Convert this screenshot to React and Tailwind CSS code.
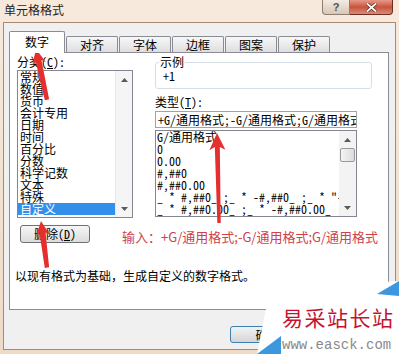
const MONO = "font-['Noto_Sans_Mono_CJK_SC','Noto_Sans_CJK_SC',monospace]";

function UpArrow() {
  return (
    <svg width="7" height="4" viewBox="0 0 7 4">
      <path d="M0 4 L3.5 0 L7 4 Z" fill="#5a5a5a" />
    </svg>
  );
}
function DownArrow() {
  return (
    <svg width="7" height="4" viewBox="0 0 7 4">
      <path d="M0 0 L3.5 4 L7 0 Z" fill="#5a5a5a" />
    </svg>
  );
}

function Arrow({ x, y, angle, len, w = 5, hw = 7, hl = 15 }) {
  const pts = [
    [0, 0],
    [-hw, hl],
    [-w / 2, hl - 3],
    [-w / 2 + 0.8, len],
    [w / 2 - 0.8, len],
    [w / 2, hl - 3],
    [hw, hl],
  ]
    .map((p) => p.join(","))
    .join(" ");
  return (
    <g transform={`translate(${x} ${y}) rotate(${angle})`}>
      <polygon points={pts} fill="#e52f2f" />
    </g>
  );
}

const categories = [
  "常规",
  "数值",
  "货币",
  "会计专用",
  "日期",
  "时间",
  "百分比",
  "分数",
  "科学记数",
  "文本",
  "特殊",
  "自定义",
];

const types = [
  "G/通用格式",
  "0",
  "0.00",
  "#,##0",
  "#,##0.00",
  '_ * #,##0_ ;_ * -#,##0_ ;_ * "-"_ ;_ @_ ',
  '_ * #,##0.00_ ;_ * -#,##0.00_ ;_ * "-"??_ ;_ @_ ',
];

function Tab({ label }) {
  return (
    <div className="ml-px w-[52px] h-[16px] border border-b-0 border-[#898c95] rounded-t-[2px] bg-gradient-to-b from-[#f7f7f7] to-[#dedede] flex items-center justify-center text-[12px] leading-[12px] text-black">
      {label}
    </div>
  );
}

export default function App() {
  return (
    <div
      className={`relative w-[399px] h-[354px] overflow-hidden bg-gradient-to-b from-[#f7eadd] to-[#eedac6] text-black ${MONO}`}
    >
      {/* title bar */}
      <div className="h-[22px] flex justify-between">
        <div className="pl-[4px] pt-[2px] text-[12px] leading-[16px] text-[#1e1e1e] font-['Noto_Sans_CJK_SC',sans-serif]">
          单元格格式
        </div>
        <div className="flex pr-[6px] h-[15px]">
          <div className="w-[28px] h-[15px] border border-t-0 border-[#8e7d70] rounded-bl-[4px] bg-gradient-to-b from-[#f3ebe3] to-[#d8c7b7] flex items-center justify-center text-[11px] font-bold text-[#505050] leading-none font-['Liberation_Sans',sans-serif]">
            ?
          </div>
          <div className="w-[43px] h-[15px] border border-t-0 border-l-0 border-[#6d2f24] rounded-br-[4px] bg-gradient-to-b from-[#e69a88] via-[#c9533d] to-[#d98a75] flex items-center justify-center">
            <svg width="11" height="9" viewBox="0 0 11 9">
              <path d="M1 0.5 L10 8.5 M10 0.5 L1 8.5" stroke="#5b2118" strokeWidth="3.2" />
              <path d="M1 0.5 L10 8.5 M10 0.5 L1 8.5" stroke="#ffffff" strokeWidth="1.8" />
            </svg>
          </div>
        </div>
      </div>

      {/* client area */}
      <div className="mx-[3px] h-[328px] border border-[#a38b76] bg-[#f0f0f0] pt-[8px] pl-[5px]">
        {/* tabs */}
        <div className="flex items-end h-[21px]">
          <div className="relative z-10 -mb-px w-[56px] h-[22px] border border-b-0 border-[#898c95] rounded-t-[2px] bg-white flex items-center justify-center text-[12px] leading-[12px] pb-[2px]">
            数字
          </div>
          <Tab label="对齐" />
          <Tab label="字体" />
          <Tab label="边框" />
          <Tab label="图案" />
          <Tab label="保护" />
        </div>

        {/* panel */}
        <div className="w-[380px] h-[258px] border border-[#898c95] bg-white">
          <div className="flex pl-[7px] pt-[3px]">
            {/* left column */}
            <div className="w-[116px]">
              <div className="h-[12px] text-[12px] leading-[12px]">
                分类(<span className="underline">C</span>):
              </div>
              <div className="mt-[2px] h-[148px] border border-[#828790] flex">
                <div className="flex-1 pt-0">
                  {categories.map((c, i) => (
                    <div
                      key={c}
                      className={
                        i === categories.length - 1
                          ? "h-[12px] text-[12px] leading-[12px] pl-[2px] bg-[#3390ea] text-white"
                          : "h-[12px] text-[12px] leading-[12px] pl-[2px]"
                      }
                    >
                      {c}
                    </div>
                  ))}
                </div>
                <div className="w-[17px] bg-[#f5f5f5] border-l border-[#e8e8e8] flex flex-col justify-between">
                  <div className="h-[17px] flex items-center justify-center">
                    <UpArrow />
                  </div>
                  <div className="h-[17px] flex items-center justify-center">
                    <DownArrow />
                  </div>
                </div>
              </div>
            </div>

            {/* right column */}
            <div className="ml-[22px] w-[217px]">
              <div className="relative mt-[6px] h-[27px] border border-[#d5dfe5] rounded-[3px]">
                <div className="absolute left-[3px] -top-[7px] bg-white px-[1px] text-[12px] leading-[12px]">
                  示例
                </div>
                <div className="pl-[7px] pt-[7px] text-[12px] leading-[12px]">+1</div>
              </div>
              <div className="mt-[7px] h-[12px] text-[12px] leading-[12px]">
                类型(<span className="underline">T</span>):
              </div>
              <div className="mt-[3px] w-[202px] h-[17px] border border-[#a3a3a3] overflow-hidden whitespace-nowrap pl-[2px] text-[12px] leading-[15px]">
                +G/通用格式;-G/通用格式;G/通用格式
              </div>
              <div className="mt-[2px] w-[202px] h-[87px] border border-[#828790] flex">
                <div className="flex-1 overflow-hidden whitespace-pre pl-[1px]">
                  {types.map((t) => (
                    <div key={t} className="h-[12px] text-[12px] leading-[12px]">
                      {t}
                    </div>
                  ))}
                </div>
                <div className="w-[17px] bg-[#f3f3f3] flex flex-col">
                  <div className="h-[17px] flex items-center justify-center">
                    <UpArrow />
                  </div>
                  <div className="mx-[1px] h-[14px] border border-[#9a9a9a] rounded-[2px] bg-gradient-to-r from-[#f4f4f4] to-[#dcdcdc]" />
                  <div className="flex-1" />
                  <div className="h-[17px] flex items-center justify-center">
                    <DownArrow />
                  </div>
                </div>
              </div>
            </div>
          </div>

          {/* row 2 */}
          <div className="flex items-start mt-[7px] pl-[10px]">
            <div className="w-[70px] h-[18px] border border-[#707070] rounded-[3px] bg-gradient-to-b from-[#f6f6f6] to-[#dcdcdc] flex items-center justify-center text-[12px] leading-[12px]">
              删除(<span className="underline">D</span>)
            </div>
            <div className="ml-[32px] mt-[4px] text-[13px] leading-[16px] text-[#d0414a] whitespace-nowrap font-['Noto_Sans_CJK_SC',sans-serif]">
              输入：+G/通用格式;-G/通用格式;G/通用格式
            </div>
          </div>

          {/* description */}
          <div className="mt-[25px] pl-[5px] text-[12px] leading-[12px]">
            以现有格式为基础，生成自定义的数字格式。
          </div>
        </div>

        {/* OK button */}
        <div className="mt-[16px] ml-[221px] w-[75px] h-[17px] border border-[#3c7fb1] rounded-[3px] bg-gradient-to-b from-[#f2f2f2] to-[#d6d6d6] flex items-center justify-center text-[12px] leading-[12px]">
          确定
        </div>
      </div>

      {/* annotations */}
      <svg className="absolute left-0 top-0 pointer-events-none" width="399" height="354">
        <Arrow x={36} y={49} angle={-12.2} len={52} w={6} hw={7} hl={15} />
        <Arrow x={41} y={221} angle={-7.3} len={47} w={6} hw={7} hl={15} />
        <Arrow x={217} y={133} angle={-1.3} len={90} w={5} hw={8} hl={17} />
        {/* watermark */}
        <polygon points="270,289 399,281 399,354 257,354" fill="#ffffff" />
        <polygon points="377,294 399,281 399,296" fill="#3d97df" />
        <polygon points="257,354 281,336 281,354" fill="#3d97df" />
      </svg>
      <div className="absolute left-[282px] top-[304px] text-[21px] leading-[26px] tracking-[1.5px] text-[#c5132f] font-['Noto_Sans_CJK_SC',serif] whitespace-nowrap">
        易采站长站
      </div>
      <div className="absolute left-[282px] top-[337px] text-[14px] leading-[16px] text-[#8a8a8a] font-['Liberation_Mono',monospace] whitespace-nowrap">
        www.easck.com
      </div>
    </div>
  );
}
